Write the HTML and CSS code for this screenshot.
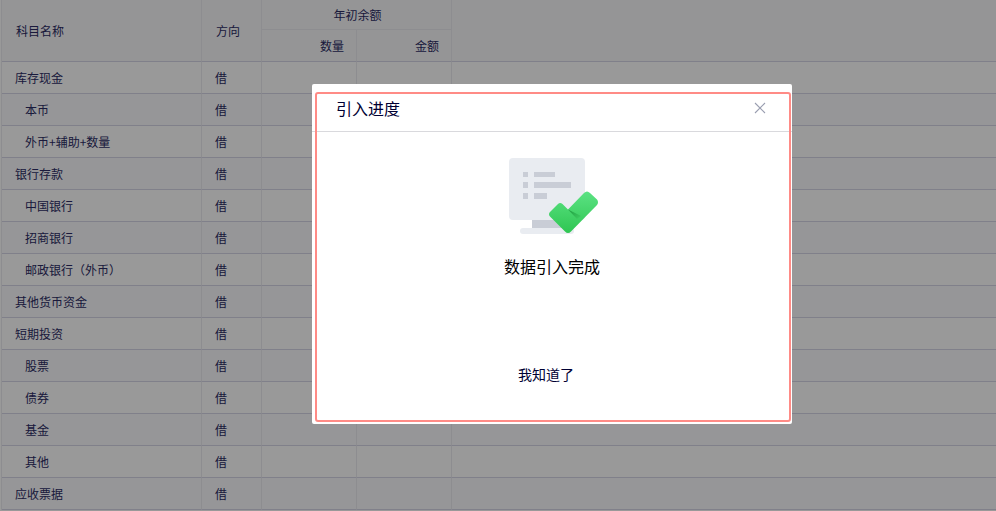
FILE: index.html
```html
<!DOCTYPE html>
<html lang="zh-CN">
<head>
    <meta charset="UTF-8">
    <meta name="viewport" content="width=device-width, initial-scale=1.0">
    <title>引入进度</title>
    <link rel="stylesheet" href="styles.css">
</head>
<body>
    <!-- Opening balance table -->
    <table class="balance-table">
        <colgroup>
            <col class="col-name">
            <col class="col-direction">
            <col class="col-number">
            <col class="col-number">
            <col>
        </colgroup>
        <thead>
            <tr>
                <th rowspan="2">科目名称</th>
                <th rowspan="2">方向</th>
                <th colspan="2" class="group">年初余额</th>
                <th rowspan="2"></th>
            </tr>
            <tr>
                <th class="number">数量</th>
                <th class="number">金额</th>
            </tr>
        </thead>
        <tbody>
            <tr><td>库存现金</td><td>借</td><td></td><td></td><td></td></tr>
            <tr><td class="child">本币</td><td>借</td><td></td><td></td><td></td></tr>
            <tr><td class="child">外币+辅助+数量</td><td>借</td><td></td><td></td><td></td></tr>
            <tr><td>银行存款</td><td>借</td><td></td><td></td><td></td></tr>
            <tr><td class="child">中国银行</td><td>借</td><td></td><td></td><td></td></tr>
            <tr><td class="child">招商银行</td><td>借</td><td></td><td></td><td></td></tr>
            <tr><td class="child">邮政银行（外币）</td><td>借</td><td></td><td></td><td></td></tr>
            <tr><td>其他货币资金</td><td>借</td><td></td><td></td><td></td></tr>
            <tr><td>短期投资</td><td>借</td><td></td><td></td><td></td></tr>
            <tr><td class="child">股票</td><td>借</td><td></td><td></td><td></td></tr>
            <tr><td class="child">债券</td><td>借</td><td></td><td></td><td></td></tr>
            <tr><td class="child">基金</td><td>借</td><td></td><td></td><td></td></tr>
            <tr><td class="child">其他</td><td>借</td><td></td><td></td><td></td></tr>
            <tr><td>应收票据</td><td>借</td><td></td><td></td><td></td></tr>
        </tbody>
    </table>

    <!-- Import progress dialog -->
    <div class="overlay">
        <div class="dialog" role="dialog" aria-labelledby="dialog-title">
            <div class="dialog-header">
                <h1 id="dialog-title">引入进度</h1>
                <button type="button" class="close" aria-label="关闭">
                    <svg width="12" height="12" viewBox="0 0 12 12" aria-hidden="true">
                        <path d="M1 1l10 10M11 1L1 11" stroke="#9a9eb0" stroke-width="1.1" fill="none"/>
                    </svg>
                </button>
            </div>
            <div class="dialog-body">
                <svg class="done-icon" width="90" height="76" viewBox="0 0 90 76" aria-hidden="true">
                    <defs>
                        <linearGradient id="tick" x1="0" y1="0" x2="0" y2="1">
                            <stop offset="0" stop-color="#5be283"/>
                            <stop offset="1" stop-color="#2fc652"/>
                        </linearGradient>
                        <linearGradient id="fold" x1="0" y1="0" x2="1" y2="1">
                            <stop offset="0" stop-color="#1f9e40"/>
                            <stop offset="1" stop-color="#3fce62"/>
                        </linearGradient>
                    </defs>
                    <rect x="23" y="60" width="32" height="10" fill="#c9cdd6"/>
                    <rect x="11" y="70" width="54" height="6" rx="3" fill="#e9ecf1"/>
                    <rect x="0" y="0" width="76" height="62" rx="4" fill="#e9ecf1"/>
                    <g fill="#c9cdd6">
                        <rect x="14" y="14" width="5" height="5"/>
                        <rect x="25" y="14" width="21" height="5"/>
                        <rect x="14" y="24" width="5" height="6"/>
                        <rect x="25" y="24" width="37" height="6"/>
                        <rect x="14" y="35" width="5" height="6"/>
                        <rect x="25" y="35" width="13" height="6"/>
                    </g>
                    <path d="M41 54L49 46Q51 44 53.500 46L59 51.500L75 35Q78 32 81 35L88 41.500Q90 44 88 47L62 73.500Q59 76.500 56 73.500L41 58.500Q39 56 41 54Z" fill="url(#tick)"/>
                    <path d="M59 51.500L72 58L68 61Z" fill="url(#fold)"/>
                </svg>
                <p class="message">数据引入完成</p>
                <button type="button" class="confirm">我知道了</button>
            </div>
        </div>
    </div>
</body>
</html>
```
FILE: styles.css
```css
* {
    margin: 0;
    padding: 0;
    box-sizing: border-box;
}

body {
    padding-left: 1px;
    font-family: "Noto Sans CJK SC", sans-serif;
    font-size: 12px;
    color: #2c2c64;
    background: #fff;
    overflow: hidden;
}

.balance-table {
    width: 100%;
    table-layout: fixed;
    border-collapse: separate;
    border-spacing: 0;
    border-left: 1px solid #ebebf1;
}

.col-name {
    width: 200px;
}

.col-direction {
    width: 60px;
}

.col-number {
    width: 95px;
}

.balance-table th,
.balance-table td {
    height: 32px;
    padding: 1px 13px 0;
    line-height: 18px;
    text-align: left;
    font-weight: 400;
    border-right: 1px solid #ebebf1;
    border-bottom: 1px solid #d6d6e6;
}

.balance-table th {
    padding: 0 12px 0 14px;
    background: #f8f8fb;
}

.balance-table th:last-child:not(.number),
.balance-table td:last-child {
    border-right: 0;
}

.balance-table .group {
    height: 30px;
    text-align: center;
    border-bottom-color: #ebebf1;
}

.balance-table .number {
    text-align: right;
}

.balance-table .child {
    padding-left: 23px;
}

.balance-table tbody tr:nth-child(even) {
    background: #fafbfd;
}

.overlay {
    position: fixed;
    inset: 0;
    display: flex;
    justify-content: center;
    align-items: flex-start;
    padding: 84px 0 0 108px;
    background: rgba(0, 0, 0, 0.4);
}

.dialog {
    position: relative;
    width: 480px;
    padding-bottom: 37px;
    background: #fff;
    border-radius: 2px;
    color: #000;
}

/* red highlight frame */
.dialog::after {
    content: "";
    position: absolute;
    inset: 8px 1px 2px 3px;
    border: 2px solid #ff8b86;
    border-radius: 3px;
    pointer-events: none;
}

.dialog-header {
    display: flex;
    justify-content: space-between;
    align-items: center;
    height: 48px;
    padding: 0 26px 0 24px;
    border-bottom: 1px solid #d9d9dd;
}

.dialog-header h1 {
    font-size: 16px;
    line-height: 24px;
    font-weight: 400;
    color: #000033;
}

.close {
    display: flex;
    padding-top: 1px;
    border: 0;
    background: none;
    cursor: pointer;
}

.dialog-body {
    display: flex;
    flex-direction: column;
    align-items: center;
    padding-top: 26px;
}

.done-icon {
    margin-left: 3px;
}

.message {
    margin-top: 20px;
    font-size: 16px;
    line-height: 24px;
}

.confirm {
    margin: 83px 12px 0 0;
    padding: 2px 0;
    border: 0;
    background: none;
    font-family: inherit;
    font-size: 14px;
    line-height: 22px;
    color: #000033;
    cursor: pointer;
}
```
